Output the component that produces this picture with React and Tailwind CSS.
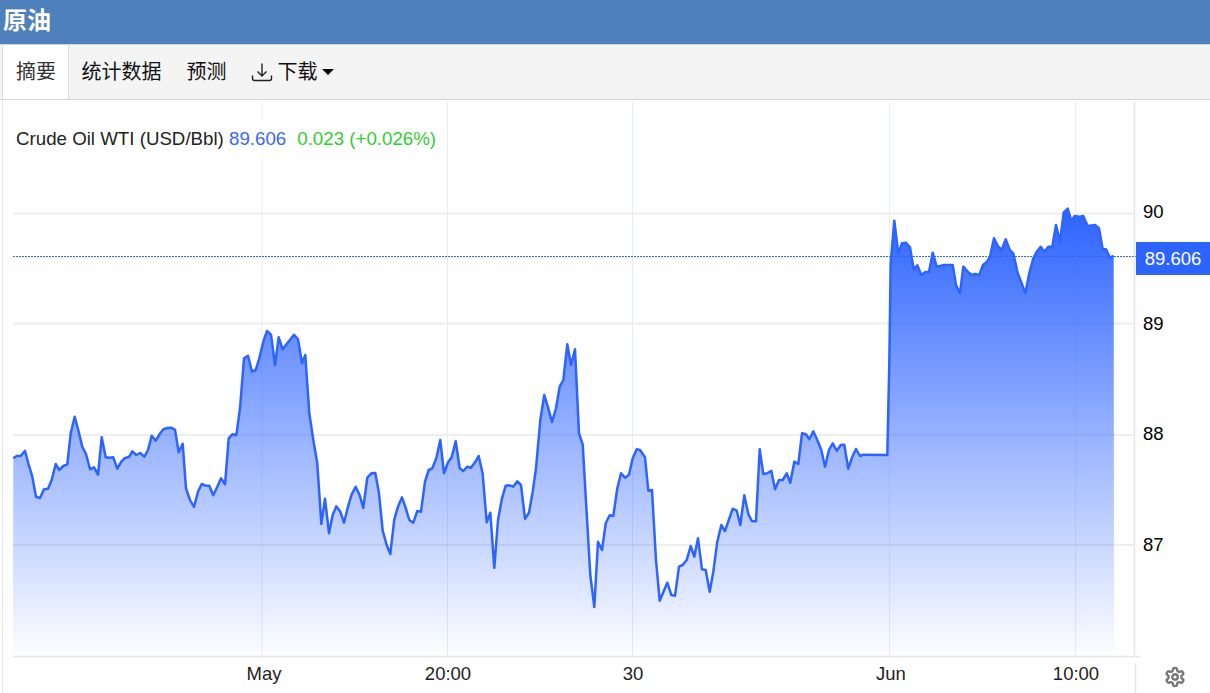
import React from "react";

// traced from the chart, x/y in page pixels minus the 100px of header and tabs
const fromZoom = (pts, ox, oy) => pts.map(([x, y]) => [ox + x / 3, oy + y / 3 - 100]);

const part1 = fromZoom([[40,475],[50,468],[62,468],[75,452],[85,490],[97,530],[108,590],[120,594],[132,568],[144,566],[155,540],[167,492],[178,510],[190,498],[202,493],[212,400],[224,350],[236,395],[247,440],[258,462],[270,508],[282,502],[294,524],[305,412],[317,472],[329,473],[340,472],[352,506],[364,485],[375,474],[387,471],[397,454],[409,465],[421,459],[433,470],[444,450],[455,407],[467,422],[479,402],[490,388],[502,384],[515,383],[525,389],[536,457],[548,431],[558,565],[570,600],[582,621],[594,575],[605,552],[617,557],[628,557],[640,586],[652,560],[663,535],[675,553],[686,415],[697,403],[709,406],[720,325],[732,175],[744,167],[756,215],[767,210],[778,175],[790,125],[801,93],[813,104],[825,195],[836,112],[848,148],[860,132],[882,104],[894,118],[906,190],[916,165],[928,340],[940,420],[952,490],[964,672],[975,596],[987,700],[998,645],[1009,619],[1021,635],[1032,668],[1044,620],[1055,583],[1067,560],[1079,586],[1090,624],[1102,533],[1114,520],[1126,519],[1137,580],[1148,692],[1160,735],[1171,762],[1183,658],[1194,620]], 0, 300);

const part2 = fromZoom([[6,592],[16,620],[28,660],[40,668],[52,633],[63,635],[75,545],[86,510],[97,505],[109,475],[121,420],[132,520],[144,487],[155,472],[167,424],[179,505],[190,513],[202,500],[213,503],[225,487],[236,468],[248,522],[260,667],[271,638],[283,804],[294,660],[306,595],[317,557],[329,556],[340,560],[352,544],[363,555],[375,656],[387,638],[398,575],[408,505],[421,360],[433,285],[445,325],[456,366],[468,325],[479,260],[490,240],[502,133],[513,195],[525,148],[537,400],[548,433],[560,640],[571,825],[583,921],[594,725],[606,750],[617,670],[629,646],[640,648],[652,565],[663,520],[675,533],[687,524],[698,475],[710,448],[720,450],[735,472],[745,572],[756,570],[768,780],[779,902],[802,848],[814,885],[825,887],[837,800],[848,795],[860,780],[872,738],[883,770],[894,715],[906,808],[917,810],[929,875],[940,815],[952,725],[964,675],[975,693],[998,626],[1010,632],[1021,675],[1033,586],[1045,642],[1056,664],[1068,664],[1079,448],[1090,522],[1102,520],[1114,512],[1125,568],[1137,540],[1148,540],[1160,520],[1171,548],[1183,485],[1195,492]], 400, 300);

const part3 = fromZoom([[6,730],[18,733],[28,748],[40,724],[52,750],[64,780],[75,830],[87,780],[98,760],[110,782],[122,765],[133,764],[145,836],[157,800],[168,777],[180,798],[190,794],[262,795],[268,520],[272,220],[283,92],[295,190],[306,160],[318,158],[330,172],[341,238],[352,226],[364,255],[376,246],[387,246],[398,188],[410,230],[433,225],[458,225],[468,285],[480,310],[490,230],[503,245],[515,255],[525,252],[538,255],[549,225],[561,215],[570,200],[582,145],[595,170],[605,180],[617,148],[629,180],[640,190],[653,250],[665,280],[676,310],[688,250],[700,205],[710,185],[722,170],[733,185],[745,170],[757,170],[768,105],[780,155],[791,68],[803,56],[814,92],[824,78],[838,80],[850,78],[863,108],[885,105],[897,115],[908,178],[918,178],[930,203],[941,198]], 800, 190);

const points = [...part1, ...part2, ...part3];
const linePath = "M" + points.map(([x, y]) => `${x.toFixed(1)} ${y.toFixed(1)}`).join("L");
const areaPath = `${linePath}L1114 552L13 552Z`;

const priceLines = [
  { y: 113.5, label: "90", labelY: 118 },
  { y: 223.5, label: "89", labelY: 230 },
  { y: 335, label: "88", labelY: 340 },
  { y: 445, label: "87", labelY: 451 },
];

const timeLines = [
  { x: 262, label: "May", labelX: 264 },
  { x: 447.5, label: "20:00", labelX: 448 },
  { x: 632.5, label: "30", labelX: 633 },
  { x: 889.5, label: "Jun", labelX: 891 },
  { x: 1075.5, label: "10:00", labelX: 1076 },
];

function Tab({ active, children }) {
  return (
    <div
      className={
        active
          ? "flex h-full items-center border-x border-[#dcdcdc] bg-white pl-[13px] pr-[12px] text-[#333]"
          : "flex h-full items-center px-[12.5px] text-[#111]"
      }
    >
      {children}
    </div>
  );
}

function PriceChart() {
  return (
    <svg width="1210" height="593" viewBox="0 0 1210 593" className="block">
      <defs>
        <linearGradient id="oilFill" gradientUnits="userSpaceOnUse" x1="0" y1="110" x2="0" y2="555">
          <stop offset="0" stopColor="#2d64ff" />
          <stop offset="1" stopColor="#2d64ff" stopOpacity="0.01" />
        </linearGradient>
      </defs>

      <line x1="2.5" y1="0" x2="2.5" y2="593" stroke="#e6e6e6" />

      {timeLines.map((t) => (
        <line key={t.label} x1={t.x} y1="2" x2={t.x} y2="556" stroke="#e6eef5" />
      ))}
      {priceLines.map((p) => (
        <line key={p.label} x1="13" y1={p.y} x2="1134" y2={p.y} stroke="#eeeeee" strokeWidth="2" />
      ))}

      <path d={areaPath} fill="url(#oilFill)" />
      <path d={linePath} fill="none" stroke="#2d64ff" strokeWidth="2.5" strokeLinejoin="round" />

      <line x1="13" y1="156.5" x2="1137" y2="156.5" stroke="#2d64ff" strokeDasharray="2 1" />

      <line x1="1134.5" y1="2" x2="1134.5" y2="556" stroke="#e6e6e6" strokeWidth="1.5" />
      <line x1="13" y1="556.5" x2="1140" y2="556.5" stroke="#e6e6e6" strokeWidth="1.5" />
      <line x1="1135.5" y1="563" x2="1135.5" y2="593" stroke="#e6e6e6" strokeWidth="1.5" />

      <g className="font-['Liberation_Sans',sans-serif] text-[18.5px]" fill="#000">
        {priceLines.map((p) => (
          <text key={p.label} x="1143" y={p.labelY}>
            {p.label}
          </text>
        ))}
      </g>
      <g className="font-['Liberation_Sans',sans-serif] text-[18.5px]" fill="#222" textAnchor="middle">
        {timeLines.map((t) => (
          <text key={t.label} x={t.labelX} y="580">
            {t.label}
          </text>
        ))}
      </g>
    </svg>
  );
}

export default function App() {
  return (
    <div className="h-[693px] w-[1210px] overflow-hidden bg-white font-['Liberation_Sans','Noto_Sans_CJK_SC',sans-serif]">
      <div className="flex h-[44px] items-center bg-[#4e80bc] pb-[2px] pl-[3px] text-[24px] font-bold text-white">
        原油
      </div>
      <div className="flex h-[56px] items-center border-y border-[#d4d4d4] bg-[#f4f4f4] pl-[2px] text-[20px]">
        <Tab active>摘要</Tab>
        <Tab>统计数据</Tab>
        <Tab>预测</Tab>
        <Tab>
          <svg width="22" height="20" viewBox="0 0 22 20" fill="none" stroke="#222" strokeWidth="1.4" className="-ml-[1px] mr-[5px]">
            <path d="M11 1.500v12.500M6.500 9.500 11 14l4.500-4.500M1.500 13.500v3a2 2 0 0 0 2 2h15a2 2 0 0 0 2-2v-3" />
          </svg>
          下载
          <span className="ml-[4px] h-0 w-0 border-x-[6px] border-t-[6px] border-x-transparent border-t-black" />
        </Tab>
      </div>
      <div className="relative">
        <PriceChart />
        <div className="absolute left-[16px] top-[20px] flex h-[38px] items-center whitespace-pre bg-white text-[18.72px] text-[#222]">
          Crude Oil WTI (USD/Bbl) <span className="text-[#3b66ff]">89.606</span>
          <span className="ml-[11px] text-[#32cd32]">0.023 (+0.026%)</span>
        </div>
        <div className="absolute left-[1136px] top-[142px] flex h-[33px] w-[74px] items-center justify-center bg-[#2d64ff] text-[18.5px] text-white">
          89.606
        </div>
        <svg
          viewBox="0 0 24 24"
          width="22"
          height="22"
          fill="none"
          stroke="#777"
          strokeWidth="2.6"
          strokeLinecap="round"
          strokeLinejoin="round"
          className="absolute left-[1164px] top-[566px]"
        >
          <path d="M12.22 2h-.44a2 2 0 0 0-2 2v.18a2 2 0 0 1-1 1.73l-.43.25a2 2 0 0 1-2 0l-.15-.08a2 2 0 0 0-2.73.73l-.22.38a2 2 0 0 0 .73 2.73l.15.1a2 2 0 0 1 1 1.72v.51a2 2 0 0 1-1 1.74l-.15.09a2 2 0 0 0-.73 2.73l.22.38a2 2 0 0 0 2.73.73l.15-.08a2 2 0 0 1 2 0l.43.25a2 2 0 0 1 1 1.73V20a2 2 0 0 0 2 2h.44a2 2 0 0 0 2-2v-.18a2 2 0 0 1 1-1.73l.43-.25a2 2 0 0 1 2 0l.15.08a2 2 0 0 0 2.73-.73l.22-.39a2 2 0 0 0-.73-2.73l-.15-.08a2 2 0 0 1-1-1.74v-.5a2 2 0 0 1 1-1.74l.15-.09a2 2 0 0 0 .73-2.73l-.22-.38a2 2 0 0 0-2.73-.73l-.15.08a2 2 0 0 1-2 0l-.43-.25a2 2 0 0 1-1-1.73V4a2 2 0 0 0-2-2z" />
          <circle cx="12" cy="12" r="3" />
        </svg>
      </div>
    </div>
  );
}
